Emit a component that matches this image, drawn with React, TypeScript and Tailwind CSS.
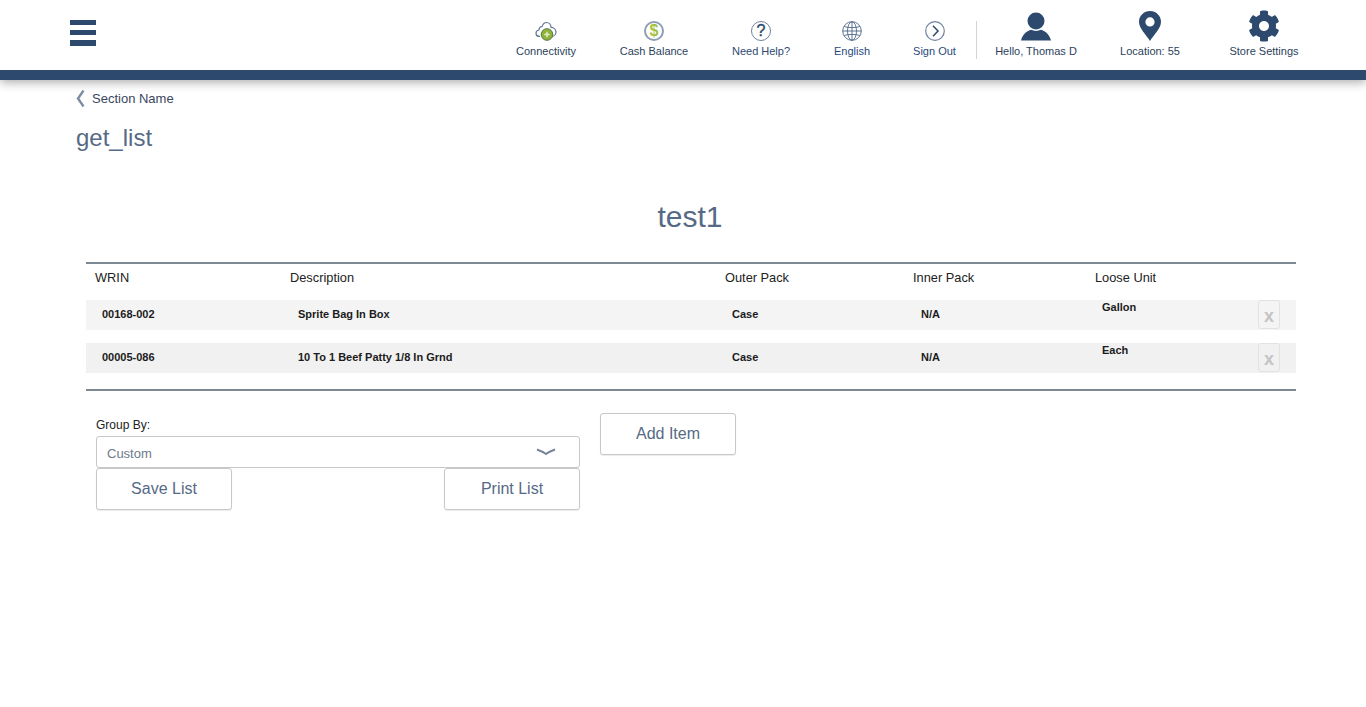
import { FaCog } from "react-icons/fa";

const FONT = "font-['Liberation_Sans',Arial,sans-serif]";

function CloudIcon() {
  return (
    <svg width="22" height="20" viewBox="0 0 22 20" fill="none">
      <path
        d="M5 15.500C2.600 15.500 1 14 1 12.200 1 10.400 2.300 9.200 4 9 4.100 6.600 5.400 5.500 7 5.600 7.800 3.400 9.500 1.500 11.500 1.500c2.600 0 4.400 2.400 4.600 4.900C18.800 6.600 21 8.500 21 11c0 2.500-2 4.500-4.500 4.500"
        stroke="#5f7390"
        strokeWidth="1.200"
      />
      <circle cx="12" cy="13.500" r="5.800" fill="#8db33a" stroke="#55733f" strokeWidth="1" />
      <path d="M12 10.800v5.400M9.300 13.500h5.400" stroke="#e6f0c8" strokeWidth="1.400" />
    </svg>
  );
}

function DollarIcon() {
  return (
    <div className="flex h-5 w-5 items-center justify-center rounded-full border-2 border-[#8f9eb2] text-[16px] leading-none font-bold text-[#a4c23f]">
      $
    </div>
  );
}

function HelpIcon() {
  return (
    <div className="flex h-5 w-5 items-center justify-center rounded-full border-[1.5px] border-[#6f82a0] text-[16px] leading-none text-[#2d4a6e] [-webkit-text-stroke:0.4px_#2d4a6e]">
      ?
    </div>
  );
}

function GlobeIcon() {
  return (
    <svg width="20" height="20" viewBox="0 0 20 20" fill="none" stroke="#4e6688" strokeWidth="0.9">
      <circle cx="10" cy="10" r="9.300" />
      <ellipse cx="10" cy="10" rx="4.500" ry="9.300" />
      <path d="M10 .7v18.600M.7 10h18.600M2 5.500c4.500 1.500 11.500 1.500 16 0M2 14.500c4.500-1.500 11.500-1.500 16 0" />
    </svg>
  );
}

function SignOutIcon() {
  return (
    <svg width="20" height="20" viewBox="0 0 20 20" fill="none">
      <circle cx="10" cy="10" r="9.300" stroke="#6f82a0" strokeWidth="1.200" />
      <path d="M8 4.800l5 5.200-5 5.200" stroke="#2d4a6e" strokeWidth="1.500" />
    </svg>
  );
}

function UserIcon() {
  return (
    <svg width="30" height="29" viewBox="0 0 30 29" fill="#2d4a6e">
      <circle cx="15" cy="9" r="8.500" />
      <path d="M0 28.500C1.500 22.500 6.500 18.500 10 17.800c3 1.500 7 1.500 10 0 3.500.7 8.500 4.700 10 10.700z" />
    </svg>
  );
}

function PinIcon() {
  return (
    <svg width="22" height="30" viewBox="0 0 22 30">
      <path
        fillRule="evenodd"
        fill="#2d4a6e"
        d="M11 0c6.100 0 11 4.800 11 10.800 0 6.700-7 12.700-11 19.200C7 23.500 0 17.500 0 10.800 0 4.800 4.900 0 11 0zm0 6.300a4.600 4.600 0 1 0 0 9.200 4.600 4.600 0 0 0 0-9.200z"
      />
    </svg>
  );
}

const navItems = [
  { label: "Connectivity", width: "w-[102px]", icon: <CloudIcon />, text: "text-[#2b3f5c]" },
  { label: "Cash Balance", width: "w-[114px]", icon: <DollarIcon />, text: "text-[#2b3f5c]" },
  { label: "Need Help?", width: "w-[100px]", icon: <HelpIcon />, text: "text-[#2d4a6e]" },
  { label: "English", width: "w-[82px]", icon: <GlobeIcon />, text: "text-[#1f4a7d]" },
  { label: "Sign Out", width: "w-[83px]", icon: <SignOutIcon />, text: "text-[#1f4a7d]" },
];

const userItems = [
  { label: "Hello, Thomas D", width: "w-[118px]", icon: <UserIcon /> },
  { label: "Location: 55", width: "w-[110px]", icon: <PinIcon /> },
  { label: "Store Settings", width: "w-[118px]", icon: <FaCog size={32} color="#2d4a6e" /> },
];

const rows = [
  { wrin: "00168-002", desc: "Sprite Bag In Box", outer: "Case", inner: "N/A", loose: "Gallon", bg: "bg-[#f4f4f4]" },
  { wrin: "00005-086", desc: "10 To 1 Beef Patty 1/8 In Grnd", outer: "Case", inner: "N/A", loose: "Each", bg: "bg-[#f1f1f1]" },
];

function OutlineButton({ label }: { label: string }) {
  return (
    <button className="h-[42px] w-[136px] rounded-[3px] border border-[#c8c8c8] bg-white text-base text-[#566a85] shadow-[0_1px_1px_rgba(0,0,0,0.08)]">
      {label}
    </button>
  );
}

export default function App() {
  return (
    <div className={`min-h-[707px] bg-white ${FONT}`}>
      {/* Header */}
      <header className="shadow-[0_3px_9px_rgba(0,0,0,0.3)]">
        <div className="flex h-[70px] items-stretch justify-between pr-[43px] pl-[70px]">
          <div className="flex w-[26px] flex-col gap-[5px] pt-5">
            <div className="h-[5px] bg-[#2d4a6e]" />
            <div className="h-[5px] bg-[#2d4a6e]" />
            <div className="h-[5.500px] bg-[#2d4a6e]" />
          </div>
          <div className="flex items-stretch">
            {navItems.map((item) => (
              <div key={item.label} className={`${item.width} flex flex-col items-center`}>
                <div className="mt-[21px] flex h-[20px] items-center justify-center">{item.icon}</div>
                <span className={`mt-[3px] text-[11px] leading-[14px] ${item.text}`}>{item.label}</span>
              </div>
            ))}
            <div className="mt-[21px] mb-[11px] w-px bg-[#d4d4d4]" />
            {userItems.map((item) => (
              <div key={item.label} className={`${item.width} flex flex-col items-center`}>
                <div className="mt-[11px] flex h-[30px] items-center justify-center">{item.icon}</div>
                <span className="mt-[3px] text-[11px] leading-[14px] text-[#2b3f5c]">{item.label}</span>
              </div>
            ))}
          </div>
        </div>
        <div className="h-[10px] bg-[#2d4a6e]" />
      </header>

      <main className="pl-[76px]">
        {/* Breadcrumb */}
        <div className="mt-[10px] flex h-[17px] items-center gap-[7px]">
          <svg width="9" height="17" viewBox="0 0 9 17" fill="none">
            <path d="M7.500 .5L2 8.500 7.500 16.500" stroke="#7c8da3" strokeWidth="2.400" />
          </svg>
          <span className="text-[13px] text-[#3a4660]">Section Name</span>
        </div>
        <h2 className="mt-[17px] text-2xl leading-[28px] text-[#566a85]">get_list</h2>

        <h1 className="mt-[47px] pr-[62px] text-center text-[30px] leading-[36px] text-[#566a85]">test1</h1>

        {/* Table */}
        <section className="mt-[27px] ml-[10px] w-[1210px]">
          <div className="border-t-2 border-[#7c8894] pt-[6px] pl-[9px]">
            <div className="grid h-[30px] grid-cols-[195px_435px_188px_182px_1fr] text-[12.800px] leading-[15px] text-[#222]">
              <span>WRIN</span>
              <span>Description</span>
              <span>Outer Pack</span>
              <span>Inner Pack</span>
              <span>Loose Unit</span>
            </div>
          </div>
          <div className="flex flex-col gap-[13px]">
            {rows.map((row) => (
              <div
                key={row.wrin}
                className={`grid h-[30px] grid-cols-[196px_434px_189px_181px_1fr] pl-[16px] text-[11px] leading-[12px] font-bold text-[#1c1c1c] ${row.bg}`}
              >
                <span className="mt-[8px]">{row.wrin}</span>
                <span className="mt-[8px]">{row.desc}</span>
                <span className="mt-[8px]">{row.outer}</span>
                <span className="mt-[8px]">{row.inner}</span>
                <div className="flex h-[30px] items-start justify-between pr-[16px]">
                  <span className="mt-[1px]">{row.loose}</span>
                  <div className="flex h-[29px] w-[22px] items-center justify-center rounded-[3px] border border-[#e2e2e2] pt-[2px] text-[18px] font-bold text-[#c4c4c4]">
                    x
                  </div>
                </div>
              </div>
            ))}
          </div>
          <div className="mt-[16px] border-t-2 border-[#7c8894]" />
        </section>

        {/* Controls */}
        <section className="ml-[20px] flex items-start gap-5 pt-[22px]">
          <div className="w-[484px]">
            <label className="block h-[23px] pt-[4px] text-xs leading-[16px] text-[#222]">Group By:</label>
            <div className="flex h-[32px] items-center justify-between rounded-[3px] border border-[#c8c8c8] pr-[23px] pl-[10px] text-[13px] text-[#6e7a8a]">
              <span className="pt-[3px]">Custom</span>
              <svg width="20" height="8" viewBox="0 0 20 8" fill="none">
                <path d="M1 1.500C5 3 8 4.500 10 6c2-1.500 5-3 9-4.500" stroke="#75849a" strokeWidth="2" />
              </svg>
            </div>
            <div className="flex justify-between">
              <OutlineButton label="Save List" />
              <OutlineButton label="Print List" />
            </div>
          </div>
          <OutlineButton label="Add Item" />
        </section>
      </main>
    </div>
  );
}
